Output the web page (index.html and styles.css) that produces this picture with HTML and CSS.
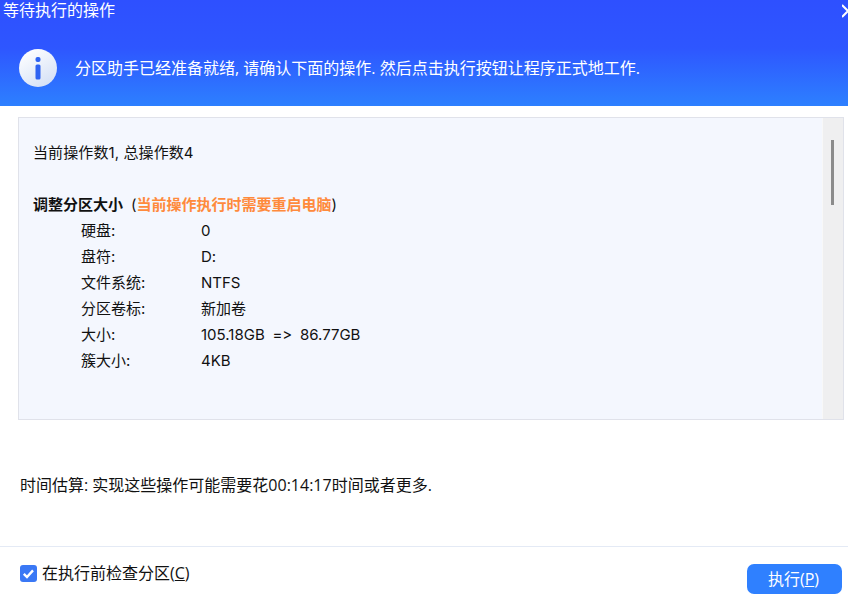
FILE: index.html
```html
<!DOCTYPE html>
<html lang="zh-CN">
<head>
<meta charset="utf-8">
<title>等待执行的操作</title>
<link rel="stylesheet" href="styles.css">
</head>
<body>
<div class="dialog">
  <header class="header">
    <div class="titlebar">
      <span class="title">等待执行的操作</span>
      <svg class="close" width="6" height="14" viewBox="0 0 6 14"><path d="M0 1l6 6-6 6" fill="none" stroke="#fff" stroke-width="2"/></svg>
    </div>
    <div class="notice">
      <svg class="info" width="38" height="38" viewBox="0 0 38 38">
        <defs><linearGradient id="g" x1="0.2" y1="0" x2="0.8" y2="1"><stop offset="0" stop-color="#ffffff"/><stop offset="1" stop-color="#d3dff5"/></linearGradient></defs>
        <circle cx="19" cy="19" r="19" fill="url(#g)"/>
        <rect x="16.5" y="8" width="5" height="5" rx="2" fill="#2f63f2"/>
        <rect x="16.5" y="15.5" width="5" height="15" rx="1.5" fill="#2f63f2"/>
      </svg>
      <p class="notice-text">分区助手已经准备就绪, 请确认下面的操作. 然后点击执行按钮让程序正式地工作.</p>
    </div>
  </header>
  <section class="panel">
    <div class="panel-body">
      <p class="count">当前操作数1, 总操作数4</p>
      <p class="op"><b>调整分区大小</b><span class="op-note">(<b class="warn">当前操作执行时需要重启电脑</b>)</span></p>
      <dl class="props">
        <dt>硬盘:</dt><dd>0</dd>
        <dt>盘符:</dt><dd>D:</dd>
        <dt>文件系统:</dt><dd>NTFS</dd>
        <dt>分区卷标:</dt><dd>新加卷</dd>
        <dt>大小:</dt><dd>105.18GB =&gt; 86.77GB</dd>
        <dt>簇大小:</dt><dd>4KB</dd>
      </dl>
    </div>
    <div class="scrollbar"><div class="thumb"></div></div>
  </section>
  <p class="estimate">时间估算: 实现这些操作可能需要花00:14:17时间或者更多.</p>
  <footer class="footer">
    <label class="check">
      <svg width="17" height="17" viewBox="0 0 17 17"><rect width="17" height="17" rx="3" fill="#3a78f5"/><path d="M3.8 8.8l3.2 3.2 6-6.6" fill="none" stroke="#fff" stroke-width="2.4"/></svg>
      <span>在执行前检查分区(<u>C</u>)</span>
    </label>
    <button class="run" type="button">执行(<u>P</u>)</button>
  </footer>
</div>
</body>
</html>
```
FILE: styles.css
```css
* { box-sizing: border-box; }
html, body { margin: 0; padding: 0; }
body {
  width: 848px;
  height: 596px;
  overflow: hidden;
  background: #fff;
  color: #111;
  font-family: "Open Sans", "Noto Sans CJK SC", sans-serif;
}
p, dl, dd { margin: 0; }
.dialog { display: flex; flex-direction: column; height: 596px; }
.header {
  height: 106px;
  background: linear-gradient(180deg, #2e50ff 0%, #2e56ff 45%, #2d80ff 100%);
  color: #fff;
}
.titlebar {
  display: flex;
  justify-content: space-between;
  align-items: center;
  height: 22px;
  padding-left: 3px;
}
.title { font-size: 16px; line-height: 20px; margin-top: -2px; }
.close { flex: none; }
.notice {
  display: flex;
  align-items: center;
  gap: 18px;
  padding: 27px 0 0 19px;
}
.info { flex: none; }
.notice-text { font-size: 16px; line-height: 38px; }
.panel {
  display: flex;
  justify-content: space-between;
  height: 303px;
  margin: 11px 4px 0 18px;
  border: 1px solid #e0e2ea;
  background: #f4f7fe;
}
.panel-body {
  padding: 25px 0 0 14px;
  font-size: 15px;
  font-family: Inter, "Noto Sans CJK SC", sans-serif;
  font-feature-settings: "calt" 0, "liga" 0;
}
.count { line-height: 20px; letter-spacing: 0.1px; }
.op { margin-top: 32px; font-size: 15px; line-height: 20px; }
.op b { font-weight: 700; }
.op-note { margin-left: 8px; }
.warn { color: #ff8a3c; }
.props {
  display: grid;
  grid-template-columns: 120px auto;
  grid-auto-rows: 26px;
  align-items: center;
  margin-top: 3px;
  padding-left: 48px;
}
.props dt, .props dd { line-height: 26px; }
.props dd { word-spacing: 3.5px; }
.scrollbar {
  flex: none;
  width: 21px;
  padding: 22px 0 0 8px;
  background: #efeff0;
  border-left: 1px solid #f8f8f8;
}
.thumb { width: 3px; height: 65px; background: #8b8b8b; }
.estimate {
  margin: 53px 0 0 20px;
  font-size: 16px;
  line-height: 24px;
}
.footer {
  display: flex;
  justify-content: space-between;
  align-items: flex-start;
  height: 50px;
  margin-top: 49px;
  padding: 17px 6px 0 20px;
  border-top: 1px solid #e4eaf5;
}
.check { display: flex; align-items: center; gap: 5px; font-size: 16px; line-height: 20px; margin-top: -1px; }
.run {
  width: 95px;
  height: 30px;
  border: 0;
  border-radius: 7px;
  background: #2f80ff;
  color: #fff;
  font: 16px/30px "Open Sans", "Noto Sans CJK SC", sans-serif;
  padding: 0 2px 0 0;
}
```
